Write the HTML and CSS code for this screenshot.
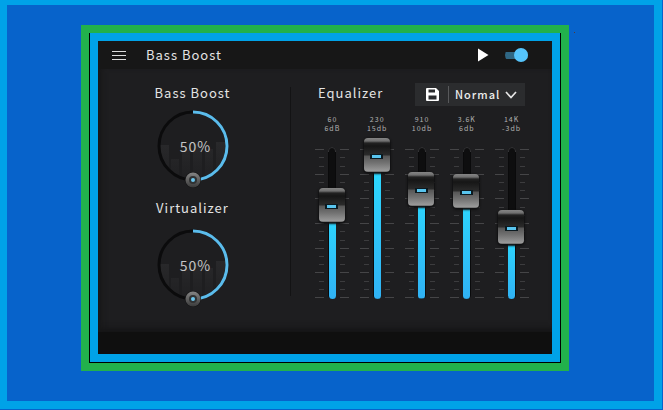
FILE: index.html
```html
<!DOCTYPE html>
<html lang="en">
<head>
<meta charset="utf-8">
<meta name="viewport" content="width=device-width, initial-scale=1">
<title>Bass Boost</title>
<link rel="stylesheet" href="styles.css">
</head>
<body>
<svg class="sprite" aria-hidden="true">
  <defs>
    <linearGradient id="metal" x1="0" y1="0" x2="0" y2="1">
      <stop offset="0" stop-color="#858585"/><stop offset="1" stop-color="#3a3a3a"/>
    </linearGradient>
    <linearGradient id="fade" x1="0" y1="0" x2="0" y2="1">
      <stop offset="0" stop-color="#29292b"/><stop offset="1" stop-color="#1f1f21"/>
    </linearGradient>
    <symbol id="dial" viewBox="0 0 76 80">
      <g fill="url(#fade)">
        <path d="M5 37h9v27q-6-6-9-16zM16 51h8v20l-8-5zM27 42h8v31h-8zM38 36h9v37h-9zM50 41h8v26l-8 5zM61 34h9v14q-3 10-9 16z"/>
      </g>
      <circle cx="38" cy="38" r="34" fill="none" stroke="#0b0b0c" stroke-width="3"/>
      <path d="M38 4a34 34 0 0 1 0 68" fill="none" stroke="#5bbcec" stroke-width="3"/>
      <circle cx="38" cy="72" r="8" fill="#151516"/>
      <circle cx="38" cy="72" r="7.500" fill="url(#metal)"/>
      <circle cx="38" cy="72" r="4" fill="#303233"/>
      <circle cx="38" cy="72" r="2" fill="#6cc6ee"/>
    </symbol>
    <symbol id="scale" viewBox="0 0 36 161">
      <g stroke="#454547" stroke-width="1">
        <path d="M1 11.500h9M26 11.500h9M1 36.500h9M26 36.500h9M1 60.500h9M26 60.500h9M1 85.500h9M26 85.500h9M1 110.500h9M26 110.500h9M1 134.500h9M26 134.500h9M1 159.500h9M26 159.500h9"/>
        <path stroke="#3c3c3e" d="M5 19.500h5M26 19.500h5M5 28.500h5M26 28.500h5M5 44.500h5M26 44.500h5M5 52.500h5M26 52.500h5M5 69.500h5M26 69.500h5M5 77.500h5M26 77.500h5M5 93.500h5M26 93.500h5M5 102.500h5M26 102.500h5M5 118.500h5M26 118.500h5M5 126.500h5M26 126.500h5M5 143.500h5M26 143.500h5M5 151.500h5M26 151.500h5"/>
      </g>
      <rect x="14.500" y="9.500" width="7" height="151" rx="3.500" fill="#0e0e0f" stroke="#0a0a0b"/>
      <path d="M14.500 14v-1a3.500 3.500 0 0 1 7 0v1" fill="none" stroke="#343436"/>
    </symbol>
  </defs>
</svg>

<div class="stage">
  <div class="frame">
    <div class="app">
      <header class="topbar">
        <button class="icon-button" type="button" aria-label="Menu">
          <svg width="14" height="10" viewBox="0 0 14 10"><path d="M0 1.500h14M0 5.500h14M0 9.500h14" stroke="#dcdcdc" stroke-width="1"/></svg>
        </button>
        <h1 class="title">Bass Boost</h1>
        <button class="icon-button play" type="button" aria-label="Play">
          <svg width="11" height="14" viewBox="0 0 11 14"><path d="M0 0.500L10.500 7L0 13.500z" fill="#fff"/></svg>
        </button>
        <input class="switch" type="checkbox" role="switch" aria-label="Effects on" checked>
      </header>

      <main class="panel">
        <section class="effects">
          <div class="effect">
            <label class="title" for="bass">Bass Boost</label>
            <div class="dial">
              <svg class="dial-art" width="76" height="80" aria-hidden="true"><use href="#dial"/></svg>
              <output class="dial-value" for="bass">50%</output>
              <input class="dial-input" id="bass" type="range" min="0" max="100" value="50">
            </div>
          </div>
          <div class="effect">
            <label class="title" for="virtualizer">Virtualizer</label>
            <div class="dial">
              <svg class="dial-art" width="76" height="80" aria-hidden="true"><use href="#dial"/></svg>
              <output class="dial-value" for="virtualizer">50%</output>
              <input class="dial-input" id="virtualizer" type="range" min="0" max="100" value="50">
            </div>
          </div>
        </section>

        <section class="equalizer">
          <div class="eq-head">
            <h2 class="title">Equalizer</h2>
            <div class="preset">
              <button class="icon-button save" type="button" aria-label="Save preset">
                <svg width="13" height="13" viewBox="0 0 13 13"><path fill="#fff" fill-rule="evenodd" d="M1 0h9l3 3v9a1 1 0 0 1-1 1H1a1 1 0 0 1-1-1V1a1 1 0 0 1 1-1zM2.500 1.500v3h6.500v-3zM2.500 7.500v4h8v-4z"/></svg>
              </button>
              <div class="picker">
                <select class="preset-select" aria-label="Preset"><option>Normal</option></select>
                <svg class="chevron" width="12" height="8" viewBox="0 0 12 8" aria-hidden="true"><path d="M1 1l5 5.500L11 1" fill="none" stroke="#e6e6e6" stroke-width="1.700"/></svg>
              </div>
            </div>
          </div>
          <div class="channels">
            <div class="channel">
              <label class="band" for="b60">60<br>6dB</label>
              <div class="fader"><svg width="36" height="161" aria-hidden="true"><use href="#scale"/></svg><input id="b60" type="range" min="0" max="100" value="61" style="--level:61%"></div>
            </div>
            <div class="channel">
              <label class="band" for="b230">230<br>15db</label>
              <div class="fader"><svg width="36" height="161" aria-hidden="true"><use href="#scale"/></svg><input id="b230" type="range" min="0" max="100" value="100" style="--level:90%"></div>
            </div>
            <div class="channel">
              <label class="band" for="b910">910<br>10db</label>
              <div class="fader"><svg width="36" height="161" aria-hidden="true"><use href="#scale"/></svg><input id="b910" type="range" min="0" max="100" value="73" style="--level:73%"></div>
            </div>
            <div class="channel">
              <label class="band" for="b3600">3.6K<br>6db</label>
              <div class="fader"><svg width="36" height="161" aria-hidden="true"><use href="#scale"/></svg><input id="b3600" type="range" min="0" max="100" value="72" style="--level:72%"></div>
            </div>
            <div class="channel">
              <label class="band" for="b14k">14K<br>-3db</label>
              <div class="fader"><svg width="36" height="161" aria-hidden="true"><use href="#scale"/></svg><input id="b14k" type="range" min="0" max="100" value="43" style="--level:43%"></div>
            </div>
          </div>
        </section>
      </main>
      <footer class="bottombar"></footer>
    </div>
  </div>
</div>
</body>
</html>
```
FILE: styles.css
```css
* { box-sizing: border-box; }

body {
  margin: 0;
  min-height: 100vh;
  display: flex;
  padding: 0 1px 1px 0;
  background: #0763cb;
  color: #e4e4e4;
  font-family: "Noto Sans CJK SC", "Noto Sans", sans-serif;
}

.sprite { position: absolute; width: 0; height: 0; }
svg { display: block; }

.stage {
  flex: 1;
  display: flex;
  padding: 20px 85px 30px 74px;
  border: solid #00a2e8;
  border-width: 5px 8px 8px 7px;
}

.frame {
  position: relative;
  flex: 1;
  display: flex;
  padding: 0 1px 1px;
  border: 8px solid #22b14c;
  background: #000;
}

/* speck beside the frame corner */
.frame::after {
  content: "";
  position: absolute;
  top: -1px;
  right: -14px;
  width: 1px;
  height: 1px;
  background: #5a3a30;
}

.app {
  flex: 1;
  display: flex;
  flex-direction: column;
  border: 8px solid #00a2e8;
  background: #1e1e20;
}

.title {
  margin: 0;
  font-size: 13px;
  font-weight: 400;
  line-height: 20px;
  letter-spacing: 1px;
}

.icon-button {
  padding: 0;
  border: 0;
  background: none;
}

.topbar {
  display: flex;
  align-items: center;
  height: 28px;
  padding: 0 24px 0 14px;
  background: #171717;
}
.topbar .title { margin-left: 20px; }
.play { margin-left: auto; }

.switch {
  appearance: none;
  display: flex;
  align-items: center;
  justify-content: flex-end;
  width: 23px;
  height: 14px;
  margin: 0 0 0 16px;
  background: linear-gradient(#2f6784, #2f6784) center / 100% 7px no-repeat;
  border-radius: 7px;
}
.switch::before {
  content: "";
  width: 14px;
  height: 14px;
  border-radius: 50%;
  background: #55c4fb;
}

.panel {
  flex: 1;
  display: grid;
  grid-template-columns: 192fr 262fr;
  background: #1e1e20;
  box-shadow: inset 7px 0 6px -4px #171718, inset 0 -8px 6px -4px #161617;
}

.effects { padding-top: 14px; }

.effect {
  display: flex;
  flex-direction: column;
  align-items: center;
  gap: 5px;
  height: 115px;
  padding-right: 3px;
}
.effect + .effect { gap: 9px; }

.dial {
  display: grid;
  place-items: center;
  width: 76px;
  height: 80px;
}
.dial > * { grid-area: 1 / 1; }
.dial-value {
  padding: 0 0 4px 6px;
  color: #c4c4c4;
  font-size: 14px;
  line-height: 20px;
  letter-spacing: 1px;
}
.dial-input {
  width: 100%;
  height: 100%;
  margin: 0;
  opacity: 0;
}

.equalizer {
  padding: 14px 18px 0 20px;
  background: linear-gradient(#131314, #131314) 0 18px / 1px calc(100% - 54px) no-repeat;
}

.eq-head {
  display: flex;
  align-items: flex-start;
  justify-content: space-between;
  height: 32px;
  padding: 0 9px 0 8px;
}

.preset {
  display: flex;
  align-items: center;
  height: 23px;
  background: #2b2c2e;
}
.save { padding: 0 9px 0 11px; }
.picker {
  display: grid;
  align-items: center;
  border-left: 1px solid #58595b;
}
.picker > * { grid-area: 1 / 1; }
.preset-select {
  appearance: none;
  height: 17px;
  padding: 0 24px 0 6px;
  border: 0;
  background: none;
  color: #ececec;
  font: 500 11px/17px "Noto Sans CJK SC", "Noto Sans", sans-serif;
  letter-spacing: 1px;
}
.chevron {
  justify-self: end;
  margin-right: 8px;
  pointer-events: none;
}

.channels {
  display: grid;
  grid-template-columns: repeat(5, 1fr);
}
.channel {
  display: flex;
  flex-direction: column;
  align-items: center;
  gap: 5px;
}
.band {
  color: #b2b2b2;
  font-size: 7px;
  line-height: 9px;
  letter-spacing: 1px;
  text-align: center;
}

.fader {
  display: grid;
  justify-items: center;
}
.fader > * { grid-area: 1 / 1; }
.fader input {
  appearance: none;
  writing-mode: vertical-lr;
  direction: rtl;
  width: 26px;
  height: 161px;
  margin: 0;
  background: none;
}
.fader input::-webkit-slider-runnable-track {
  display: flex;
  align-items: center;
  width: 7px;
  height: 161px;
  border-radius: 4px;
  background: linear-gradient(to top, #30b2f4, #2cdcff) bottom / 100% var(--level) no-repeat;
}
.fader input::-webkit-slider-thumb {
  appearance: none;
  width: 26px;
  height: 34px;
  margin-left: -10px;
  border-radius: 4px;
  background:
    linear-gradient(#59c5ef, #59c5ef) 50% 17px / 9px 3px no-repeat,
    linear-gradient(#0c1a20, #0c1a20) 50% 16px / 13px 5px no-repeat,
    linear-gradient(#858585 0, #707070 3px, #222 5px, #161616 8px, #2b2b2b 17px, #565656 18px, #727272 25px, #9a9a9a 33px, #555 34px);
  box-shadow: 0 1px 2px 1px #101011;
}

.bottombar {
  height: 22px;
  background: #0f0f0f;
}
```
